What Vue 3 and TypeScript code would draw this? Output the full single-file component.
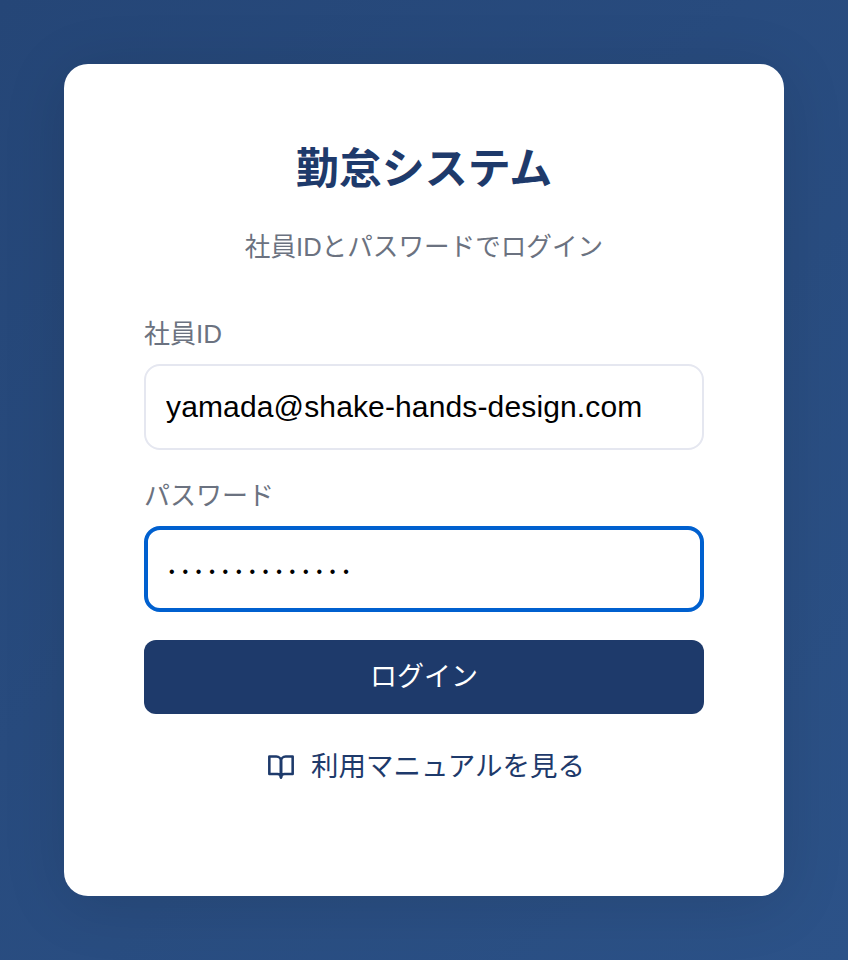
<script setup lang="ts">
import { ref } from 'vue'

const employeeId = ref('yamada@shake-hands-design.com')
const password = ref('aaaaaaaaaaaaaa')
</script>

<template>
  <div class="page">
    <main class="card">
      <h1 class="title">勤怠システム</h1>
      <p class="subtitle">社員IDとパスワードでログイン</p>
      <form class="form" @submit.prevent>
        <label class="field">
          <span class="label">社員ID</span>
          <input v-model="employeeId" class="input" type="text" />
        </label>
        <label class="field">
          <span class="label">パスワード</span>
          <input v-model="password" class="input input-focus" type="password" />
        </label>
        <button class="submit" type="submit">ログイン</button>
      </form>
      <a class="manual" href="#">
        <svg class="book" width="28" height="28" viewBox="0 0 24 24" fill="none" stroke="currentColor" stroke-width="2.2" stroke-linecap="round" stroke-linejoin="round">
          <path d="M2 3h6a4 4 0 0 1 4 4v14a3 3 0 0 0-3-3H2z" />
          <path d="M22 3h-6a4 4 0 0 0-4 4v14a3 3 0 0 1 3-3h7z" />
        </svg>
        <span>利用マニュアルを見る</span>
      </a>
    </main>
  </div>
</template>

<style>
html, body { margin: 0; padding: 0; }
</style>

<style scoped>
.page {
  box-sizing: border-box;
  width: 848px;
  height: 960px;
  padding: 64px;
  background: linear-gradient(135deg, #254677 0%, #2c5288 100%);
  font-family: "Liberation Sans", "Noto Sans CJK JP", sans-serif;
}
.card {
  box-sizing: border-box;
  width: 720px;
  height: 832px;
  padding: 75px 80px 0;
  background: #fff;
  border-radius: 24px;
  box-shadow: 0 8px 64px rgba(0, 0, 0, 0.12);
  display: flex;
  flex-direction: column;
}
.title {
  margin: 0;
  font-size: 43px;
  line-height: 60px;
  font-weight: 700;
  color: #1e3a6b;
  text-align: center;
}
.subtitle {
  margin: 30px 0 0;
  font-size: 25.6px;
  line-height: 36px;
  color: #6b7280;
  text-align: center;
}
.form {
  margin-top: 51px;
  display: flex;
  flex-direction: column;
}
.field {
  display: flex;
  flex-direction: column;
  gap: 12px;
  margin-bottom: 28px;
}
.label {
  font-size: 26px;
  line-height: 36px;
  color: #6b7280;
}
.input {
  box-sizing: border-box;
  width: 100%;
  height: 86px;
  padding: 0 20px;
  border: 2px solid #e5e7f0;
  border-radius: 16px;
  background: #fff;
  outline: none;
  color: #000;
  font-family: inherit;
  font-size: 30px;
  letter-spacing: 0.14px;
}
.input-focus {
  border: 4px solid #0060cf;
  padding: 5px 18px 0 21px;
  font-size: 16px;
  letter-spacing: 7.8px;
}
.submit {
  height: 74px;
  padding: 0 0 6px;
  border: 0;
  border-radius: 12px;
  background: #1e3a6b;
  color: #fff;
  font-family: inherit;
  font-size: 27px;
}
.manual {
  margin-top: 33px;
  margin-left: 4px;
  align-self: center;
  display: flex;
  align-items: center;
  gap: 16px;
  color: #1e3a6b;
  font-size: 27.5px;
  line-height: 40px;
  text-decoration: none;
}
.book { flex: none; }
</style>
